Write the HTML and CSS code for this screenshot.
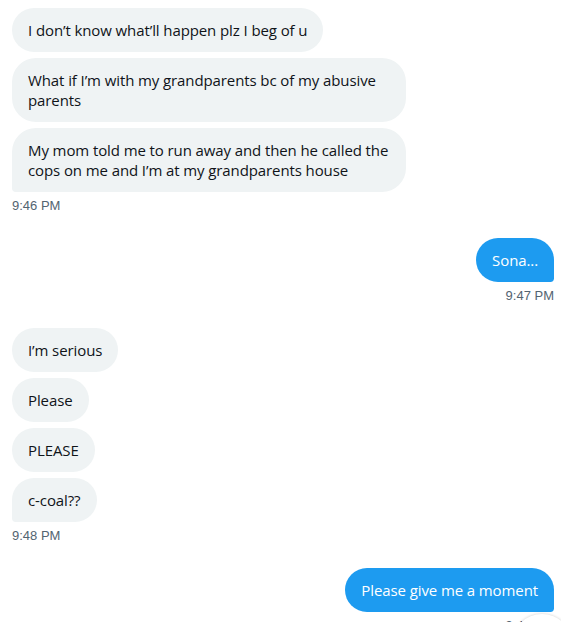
FILE: index.html
```html
<!DOCTYPE html>
<html>
<head>
<meta charset="utf-8">
<link rel="stylesheet" href="styles.css">
</head>
<body>
<div class="chat">
  <div class="group received">
    <div class="bubble">I don’t know what’ll happen plz I beg of u</div>
    <div class="bubble">What if I’m with my grandparents bc of my abusive parents</div>
    <div class="bubble last">My mom told me to run away and then he called the cops on me and I’m at my grandparents house</div>
    <div class="time">9:46 PM</div>
  </div>
  <div class="group sent">
    <div class="bubble last">Sona...</div>
    <div class="time">9:47 PM</div>
  </div>
  <div class="group received">
    <div class="bubble">I’m serious</div>
    <div class="bubble">Please</div>
    <div class="bubble">PLEASE</div>
    <div class="bubble last">c-coal??</div>
    <div class="time">9:48 PM</div>
  </div>
  <div class="group sent">
    <div class="bubble last">Please give me a moment</div>
    <div class="time">9:48 PM</div>
  </div>
</div>
<div class="scroll-btn"></div>
</body>
</html>
```
FILE: styles.css
```css
html, body {
  margin: 0;
  padding: 0;
  background: #ffffff;
  overflow: hidden;
}
body {
  width: 561px;
  height: 622px;
  position: relative;
  font-family: "Open Sans", "Liberation Sans", sans-serif;
}
.chat {
  padding: 8px 7px 0 12px;
  display: flex;
  flex-direction: column;
  gap: 24px;
}
.group {
  display: flex;
  flex-direction: column;
  gap: 6px;
}
.group.received { align-items: flex-start; }
.group.sent { align-items: flex-end; }
.bubble {
  max-width: 362px;
  padding: 12px 16px;
  font-size: 15px;
  line-height: 20px;
  border-radius: 24px;
  color: #0f1419;
  background: #eff3f4;
  letter-spacing: -0.1px;
}
.received .bubble.last { border-bottom-left-radius: 4px; }
.sent .bubble {
  background: #1d9bf0;
  color: #ffffff;
}
.sent .bubble.last { border-bottom-right-radius: 4px; }
.time {
  font-family: "Liberation Sans", sans-serif;
  font-size: 13px;
  line-height: 16px;
  color: #536471;
}
.scroll-btn {
  position: absolute;
  left: 512px;
  top: 614px;
  width: 60px;
  height: 60px;
  border-radius: 50%;
  background: #ffffff;
  box-shadow: 0 0 3px rgba(0,0,0,0.2);
}
```
